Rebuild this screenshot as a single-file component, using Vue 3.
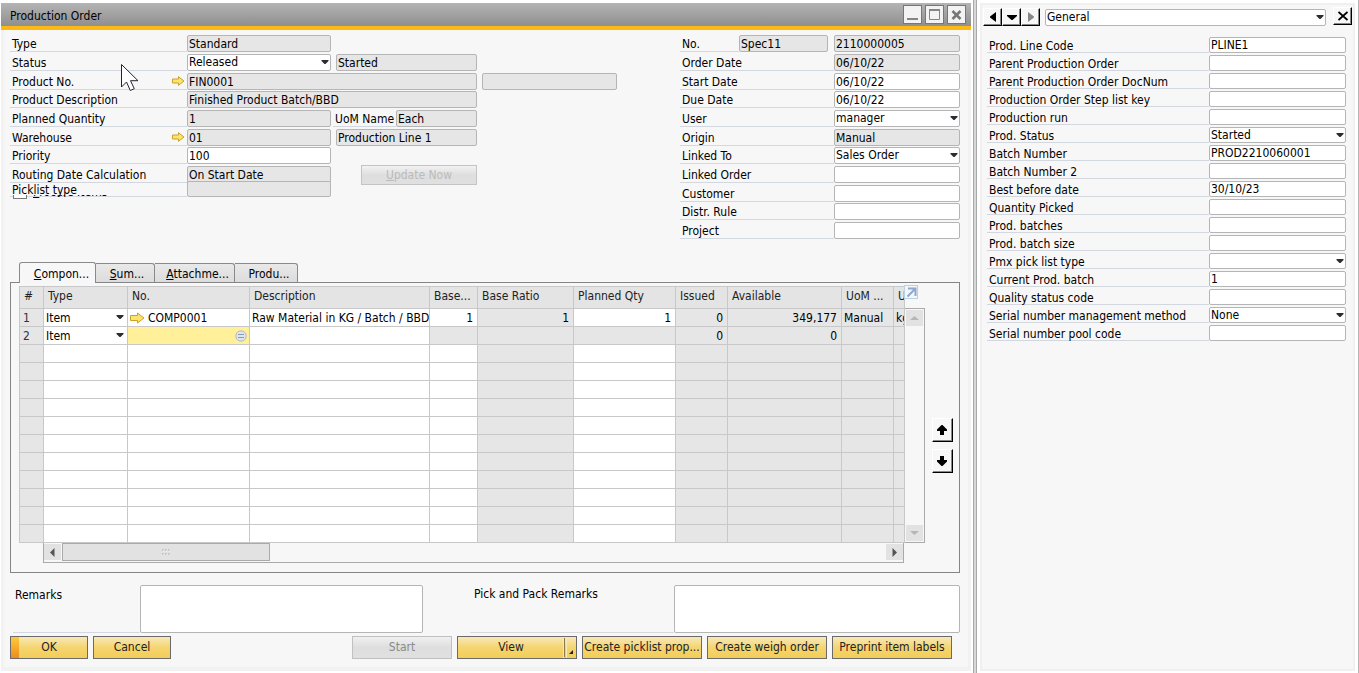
<script setup>
import { ref } from 'vue'

const leftRows = [
  { id: 'type', label: 'Type', value: 'Standard', ro: true },
  { id: 'status', label: 'Status', value: 'Released', select: true, extra: 'Started' },
  { id: 'product', label: 'Product No.', value: 'FIN0001', ro: true, wide: true, arrow: true, third: true },
  { id: 'description', label: 'Product Description', value: 'Finished Product Batch/BBD', ro: true, wide: true },
  { id: 'quantity', label: 'Planned Quantity', value: '1', ro: true, uom: 'Each' },
  { id: 'warehouse', label: 'Warehouse', value: '01', ro: true, arrow: true, extra: 'Production Line 1' },
  { id: 'priority', label: 'Priority', value: '100' },
  { id: 'routing', label: 'Routing Date Calculation', value: 'On Start Date', ro: true, update: true },
]

const rightRows = [
  { id: 'number', label: 'No.', value: '2110000005', ro: true, series: 'Spec11' },
  { id: 'orderdate', label: 'Order Date', value: '06/10/22', ro: true },
  { id: 'startdate', label: 'Start Date', value: '06/10/22' },
  { id: 'duedate', label: 'Due Date', value: '06/10/22' },
  { id: 'user', label: 'User', value: 'manager', select: true },
  { id: 'origin', label: 'Origin', value: 'Manual', ro: true },
  { id: 'linkedto', label: 'Linked To', value: 'Sales Order', select: true },
  { id: 'linkedorder', label: 'Linked Order', value: '' },
  { id: 'customer', label: 'Customer', value: '' },
  { id: 'rule', label: 'Distr. Rule', value: '' },
  { id: 'project', label: 'Project', value: '' },
]

const sideRows = [
  { label: 'Prod. Line Code', value: 'PLINE1' },
  { label: 'Parent Production Order', value: '' },
  { label: 'Parent Production Order DocNum', value: '' },
  { label: 'Production Order Step list key', value: '' },
  { label: 'Production run', value: '' },
  { label: 'Prod. Status', value: 'Started', select: true },
  { label: 'Batch Number', value: 'PROD2210060001' },
  { label: 'Batch Number 2', value: '' },
  { label: 'Best before date', value: '30/10/23' },
  { label: 'Quantity Picked', value: '' },
  { label: 'Prod. batches', value: '' },
  { label: 'Prod. batch size', value: '' },
  { label: 'Pmx pick list type', value: '', select: true },
  { label: 'Current Prod. batch', value: '1' },
  { label: 'Quality status code', value: '' },
  { label: 'Serial number management method', value: 'None', select: true },
  { label: 'Serial number pool code', value: '' },
]

const tabs = [
  { key: 'C', rest: 'ompon...', cls: 'tab-a' },
  { key: 'S', rest: 'um...', cls: 'tab-b' },
  { key: 'A', rest: 'ttachme...', cls: 'tab-c' },
  { key: '', rest: 'Produ...', cls: 'tab-d' },
]
const active = ref(0)
const emptyRows = 11
</script>

<template>
  <div class="desktop">
    <main class="window">
      <header class="titlebar">
        <h1>Production Order</h1>
        <button class="winbtn" aria-label="Minimize">
          <svg width="17" height="17" viewBox="0 0 17 17"><path d="M3 13h11" stroke="#858585" stroke-width="2" /></svg>
        </button>
        <button class="winbtn" aria-label="Maximize">
          <svg width="17" height="17" viewBox="0 0 17 17"><path d="M3.500 3.500h10v10h-10z" fill="none" stroke="#858585" stroke-width="1" /><path d="M3 4h11" stroke="#858585" stroke-width="2" /></svg>
        </button>
        <button class="winbtn" aria-label="Close">
          <svg width="17" height="17" viewBox="0 0 17 17"><path d="M4.500 5l8 8M12.500 5l-8 8" stroke="#777" stroke-width="2.600" /></svg>
        </button>
      </header>

      <div class="content">
        <div class="forms">
          <form class="left" @submit.prevent>
            <div v-for="r in leftRows" :key="r.id" class="row">
              <label class="cap" :for="r.id">{{ r.label }}
                <svg v-if="r.arrow" class="link" width="13" height="10" viewBox="0 0 13 10"><path d="M.5 3h6V.7L12 5 6.500 9.300V7h-6z" fill="#fbe36c" stroke="#c9a227" /></svg>
              </label>
              <span v-if="r.select" class="pick mid">
                <select :id="r.id" class="field"><option>{{ r.value }}</option></select>
                <svg class="caret" width="8" height="5" viewBox="0 0 8 5"><path d="M.5 0h7v1L4.500 4h-1L.5 1z" fill="#2b2b33" /></svg>
              </span>
              <input v-else :id="r.id" class="field" :class="[r.wide ? 'wide' : 'mid', { ro: r.ro }]" :value="r.value" :readonly="r.ro">
              <input v-if="r.extra" class="field ro second" :value="r.extra" :aria-label="r.label + ' detail'" readonly>
              <input v-if="r.third" class="field ro third" value="" aria-label="Product variant" readonly>
              <template v-if="r.uom">
                <label class="uom" for="uom">UoM Name</label>
                <input id="uom" class="field ro uomfield" :value="r.uom" readonly>
              </template>
              <button v-if="r.update" class="update" disabled><u>U</u>pdate Now</button>
            </div>
            <div class="row picklist">
              <label class="cap" for="picklist">Picklist type</label>
              <input id="picklist" class="field ro mid" value="" readonly>
            </div>
            <div class="procure">
              <input id="procure" type="checkbox"><label for="procure"><u>P</u>rocure Items</label>
            </div>
          </form>

          <form class="right" @submit.prevent>
            <div v-for="r in rightRows" :key="r.id" class="row">
              <label class="cap" :class="{ short: r.series }" :for="r.id">{{ r.label }}</label>
              <input v-if="r.series" class="field ro series" :value="r.series" aria-label="Series" readonly>
              <span v-if="r.select" class="pick grow">
                <select :id="r.id" class="field"><option>{{ r.value }}</option></select>
                <svg class="caret" width="8" height="5" viewBox="0 0 8 5"><path d="M.5 0h7v1L4.500 4h-1L.5 1z" fill="#2b2b33" /></svg>
              </span>
              <input v-else :id="r.id" class="field grow" :class="{ ro: r.ro }" :value="r.value" :readonly="r.ro">
            </div>
          </form>
        </div>

        <nav class="tabs" role="tablist">
          <button v-for="(t, i) in tabs" :key="t.rest" role="tab" :aria-selected="active === i" :class="[t.cls, { on: active === i }]" @click="active = i"><u>{{ t.key }}</u>{{ t.rest }}</button>
        </nav>

        <section class="panel">
          <div class="gridarea">
            <div class="tablewrap">
              <table>
                <colgroup>
                  <col class="c0"><col class="c1"><col class="c2"><col class="c3"><col class="c4"><col class="c5"><col class="c6"><col class="c7"><col class="c8"><col class="c9"><col>
                </colgroup>
                <thead>
                  <tr>
                    <th>#</th><th>Type</th><th>No.</th><th>Description</th><th>Base...</th><th>Base Ratio</th><th>Planned Qty</th><th>Issued</th><th>Available</th><th>UoM ...</th><th>UoM</th>
                  </tr>
                </thead>
                <tbody>
                  <tr>
                    <td class="g idx">1</td>
                    <td><span class="pick cell"><select aria-label="Row 1 type"><option>Item</option></select><svg class="caret" width="8" height="5" viewBox="0 0 8 5"><path d="M.5 0h7v1L4.500 4h-1L.5 1z" fill="#2b2b33" /></svg></span></td>
                    <td class="code"><svg width="15" height="12" viewBox="0 0 15 12"><path d="M.5 3.500h7V1l6.500 5-6.500 5V8.500h-7z" fill="#fbe36c" stroke="#c9a227" /></svg>COMP0001</td>
                    <td>Raw Material in KG / Batch / BBD</td>
                    <td class="n">1</td><td class="g n">1</td><td class="n">1</td><td class="g n">0</td><td class="g n">349,177</td><td class="g">Manual</td><td class="g">kg</td>
                  </tr>
                  <tr>
                    <td class="g idx">2</td>
                    <td><span class="pick cell"><select aria-label="Row 2 type"><option>Item</option></select><svg class="caret" width="8" height="5" viewBox="0 0 8 5"><path d="M.5 0h7v1L4.500 4h-1L.5 1z" fill="#2b2b33" /></svg></span></td>
                    <td class="focus"><svg width="12" height="12" viewBox="0 0 12 12"><circle cx="6" cy="6" r="5.200" fill="#dfe5ec" stroke="#b3bac4" /><path d="M3 4.500h6M3 7.500h6" stroke="#8a9bb8" /></svg></td>
                    <td></td><td class="g"></td><td class="g"></td><td class="g"></td><td class="g n">0</td><td class="g n">0</td><td class="g"></td><td class="g"></td>
                  </tr>
                  <tr v-for="n in emptyRows" :key="n">
                    <td class="g"></td><td></td><td></td><td></td><td></td><td class="g"></td><td></td><td class="g"></td><td class="g"></td><td class="g"></td><td class="g"></td>
                  </tr>
                </tbody>
              </table>
              <div class="hscroll">
                <button class="sb" aria-label="Scroll left"><svg width="5" height="9" viewBox="0 0 5 9"><path d="M4.500 0v9L0 4.500z" fill="#555" /></svg></button>
                <div class="thumb">
                  <svg width="9" height="6" viewBox="0 0 9 6"><path d="M0 1h2M3 1h2M6 1h2M0 5h2M3 5h2M6 5h2" stroke="#aaa" /><path d="M1 2h1M4 2h1M7 2h1M1 6h1M4 6h1M7 6h1" stroke="#fff" /></svg>
                </div>
                <button class="sb" aria-label="Scroll right"><svg width="5" height="9" viewBox="0 0 5 9"><path d="M.5 0v9L5 4.500z" fill="#555" /></svg></button>
              </div>
            </div>
            <div class="vcol">
              <button class="expand" aria-label="Expand grid">
                <svg width="13" height="13" viewBox="0 0 13 13"><path d="M3 2.500h7.500V10M10 3L2.500 10.500" fill="none" stroke="#8fa8cf" stroke-width="2" /></svg>
              </button>
              <div class="vscroll">
                <button class="sb" aria-label="Scroll up"><svg width="9" height="4" viewBox="0 0 9 4"><path d="M0 4h9L4.500 0z" fill="#b5b5b5" /></svg></button>
                <button class="sb" aria-label="Scroll down"><svg width="9" height="4" viewBox="0 0 9 4"><path d="M0 0h9L4.500 4z" fill="#b5b5b5" /></svg></button>
              </div>
            </div>
            <div class="movers">
              <button class="raised" aria-label="Move row up"><svg width="12" height="10" viewBox="0 0 12 10"><path d="M5.500 0h1L11 4.500V6H8v4H4V6H1V4.500z" /></svg></button>
              <button class="raised" aria-label="Move row down"><svg width="12" height="10" viewBox="0 0 12 10"><path d="M5.500 10h1L11 5.500V4H8V0H4v4H1v1.500z" /></svg></button>
            </div>
          </div>
        </section>

        <div class="remarks">
          <label class="rem-a" for="remarks">Remarks</label>
          <textarea id="remarks" class="area-a"></textarea>
          <label class="rem-b" for="pickremarks">Pick and Pack Remarks</label>
          <textarea id="pickremarks" class="area-b"></textarea>
        </div>

        <footer class="actions">
          <button class="gold small ok">OK</button>
          <button class="gold small">Cancel</button>
          <button class="start" disabled>Start</button>
          <button class="gold view">View<svg width="11" height="21" viewBox="0 0 11 21"><path d="M.5 0v21M3.500 0v21" stroke="#f9e9b4" /><path d="M1.500 1v19" stroke="#8b7a4b" /><path d="M10 13v4H6z" fill="#222" /></svg></button>
          <button class="gold">Create picklist prop...</button>
          <button class="gold">Create weigh order</button>
          <button class="gold">Preprint item labels</button>
        </footer>
      </div>
    </main>

    <div class="splitter"></div>

    <aside class="side">
      <div class="sidebody">
        <div class="toolbar">
          <button class="raised nav" aria-label="Previous"><svg width="6" height="10" viewBox="0 0 6 10"><path d="M6 0v10L0 5.500v-1z" /></svg></button>
          <button class="raised nav" aria-label="List"><svg width="10" height="5" viewBox="0 0 10 5"><path d="M0 0h10v1L5.500 5h-1L0 1z" /></svg></button>
          <button class="raised nav" aria-label="Next"><svg width="6" height="10" viewBox="0 0 6 10"><path d="M0 0v10l6-4.500v-1z" fill="#888" /></svg></button>
          <span class="pick category">
            <select class="field" aria-label="Category"><option>General</option></select>
            <svg class="caret" width="8" height="5" viewBox="0 0 8 5"><path d="M.5 0h7v1L4.500 4h-1L.5 1z" fill="#2b2b33" /></svg>
          </span>
          <button class="raised nav close" aria-label="Close panel"><svg width="10" height="10" viewBox="0 0 10 10"><path d="M.5 1l9 8M9.500 1l-9 8" stroke="#000" stroke-width="1.800" /></svg></button>
        </div>
        <form class="udf" @submit.prevent>
          <div v-for="(r, i) in sideRows" :key="r.label" class="row">
            <label class="cap" :class="{ low: r.select }" :for="'udf' + i">{{ r.label }}</label>
            <span v-if="r.select" class="pick udffield">
              <select :id="'udf' + i" class="field"><option>{{ r.value }}</option></select>
              <svg class="caret" width="8" height="5" viewBox="0 0 8 5"><path d="M.5 0h7v1L4.500 4h-1L.5 1z" fill="#2b2b33" /></svg>
            </span>
            <input v-else :id="'udf' + i" class="field udffield" :value="r.value">
          </div>
        </form>
      </div>
    </aside>

    <svg class="pointer" width="19" height="28" viewBox="0 0 19 28"><path d="M.5 .5v22.500l5-5 3.800 8.500 4-1.800-3.800-8H17z" fill="#fff" stroke="#223" /></svg>
  </div>
</template>

<style>
body { margin: 0; background: #fff; }
</style>

<style scoped>
.desktop, .desktop * { box-sizing: border-box; }
.desktop {
  display: flex;
  min-height: 100vh;
  position: relative;
  font-family: Tahoma, "DejaVu Sans Condensed", "Noto Sans", sans-serif;
  font-size: 12px;
  line-height: 16px;
  color: #000;
}
button, input, select, textarea { font: inherit; color: inherit; margin: 0; padding: 0; border-radius: 0; }
button { display: flex; align-items: center; justify-content: center; white-space: nowrap; overflow: hidden; }
svg { display: block; flex: none; }

.window { flex: 1; min-width: 0; margin: 3px 2px 2px 1px; background: #f2f2f2; display: flex; flex-direction: column; }
.titlebar {
  display: flex; align-items: center; gap: 3px; height: 27px; padding: 0 5px 0 9px;
  background: linear-gradient(#b4b4b4, #8f8f8f); border-bottom: 4px solid #fdb813;
}
h1 { flex: 1; margin: 0; font-size: 12px; font-weight: 400; line-height: 18px; padding-top: 2px; }
.winbtn { width: 19px; height: 19px; background: #f3f3f3; border: 1px solid #777; }
.content { background: #f7f7f7; margin: 0 3px 4px; padding: 5px 8px 8px 6px; flex: 1; }

.forms { display: flex; justify-content: space-between; height: 227px; }
.left, .right { display: grid; grid-auto-rows: 19px 19px 18px; align-content: start; }
.right { width: 280px; grid-template-columns: minmax(0, 1fr); }
.row { display: flex; align-items: flex-start; min-width: 0; }
.cap { width: 177px; height: 17px; line-height: 18px; padding-left: 2px; border-bottom: 1px solid #d3d7df; white-space: nowrap; display: flex; justify-content: space-between; }
.link { margin: 3px 2px 0 0; }
.field { display: block; height: 17px; padding: 0 1px; border: 1px solid #b5b5b5; border-radius: 2px; background: #fff; outline: none; min-width: 0; line-height: 15px; }
.ro { background: #e6e6e6; }
.mid { width: 144px; }
.wide { width: 290px; }
.second { width: 141px; margin-left: 5px; }
.third { width: 135px; margin-left: 5px; }
.uom { width: 63px; margin-left: 2px; padding-left: 2px; height: 17px; border-bottom: 1px solid #d3d7df; white-space: nowrap; line-height: 18px; }
.uomfield { width: 81px; }
.update { width: 116px; height: 20px; margin: -1px 0 0 30px; background: linear-gradient(#f2f2f2, #dedede 50%, #e0e0e0); border: 1px solid #c4c4c4; color: #bbb; }
.picklist { margin-top: -4px; }
.picklist .field, .picklist .cap { height: 16px; }
.procure { display: flex; align-items: flex-end; height: 20px; margin: -23px 0 0 3px; clip-path: inset(15px 0 1px 0); line-height: 16px; }
.procure input { appearance: none; width: 14px; height: 14px; border: 1px solid #777; background: #fff; margin: 0 6px 1px 0; }
.pick { display: block; position: relative; height: 17px; }
.pick select { width: 100%; appearance: none; }
.pick .caret { position: absolute; right: 2px; top: 6px; pointer-events: none; }
.right .cap { width: 154px; }
.right .cap.short { width: 59px; }
.right .series { width: 89px; margin-right: 6px; }
.grow { flex: 1; min-width: 0; }

.tabs { display: flex; padding-left: 9px; height: 20px; align-items: flex-end; position: relative; z-index: 1; }
.tabs button { height: 19px; border: 1px solid #8a8a8a; border-left: 0; border-bottom: 0; border-radius: 0 3px 0 0; background: linear-gradient(#e9e9e9, #dcdcdc); line-height: 18px; padding-top: 1px; }
.tabs button.on { height: 21px; margin-bottom: -1px; border-left: 1px solid #8a8a8a; border-radius: 3px 3px 0 0; background: #f7f7f7; }
.tabs .tab-a { width: 77px; padding-left: 8px; }
.tabs .tab-b { width: 59px; padding-left: 4px; }
.tabs .tab-c { width: 80px; padding-left: 6px; }
.tabs .tab-d { width: 63px; padding-left: 6px; }

.panel { border: 1px solid #858585; padding: 3px 6px 9px 8px; }
.gridarea { display: flex; }
.tablewrap { flex: 1; min-width: 0; }
table { width: 100%; table-layout: fixed; border-collapse: collapse; }
.c0 { width: 24px; } .c1 { width: 84px; } .c2 { width: 122px; } .c3 { width: 180px; } .c4 { width: 48px; }
.c5 { width: 96px; } .c6 { width: 102px; } .c7 { width: 52px; } .c8 { width: 114px; } .c9 { width: 52px; }
th, td { border: 1px solid #c8c8c8; overflow: hidden; white-space: nowrap; padding: 0 2px; text-align: left; font-weight: 400; }
th { height: 22px; padding: 0 0 3px 4px; background: #e4e4e4; color: #222; }
td { height: 18px; line-height: 16px; padding-top: 1px; background: #fff; }
td.g { background: #e6e6e6; }
td.idx { padding-left: 3px; color: #333; }
td.n { text-align: right; padding-right: 4px; }
td.focus { background: #fff099; }
td.focus svg { margin-left: auto; }
td.code svg { display: inline-block; vertical-align: -2px; margin-right: 3px; }
.cell { height: 16px; }
.cell select { display: block; height: 16px; border: 0; background: transparent; }
.pick.cell .caret { right: 1px; top: 5px; }

.sb { width: 17px; height: 16px; border: 0; background: #e2e2e2; }
.hscroll { display: flex; align-items: center; height: 20px; margin: 0 1px 0 24px; border: 1px solid #aaa; border-top: 0; padding: 0 0 1px; }
.thumb { width: 208px; height: 18px; margin: 0 auto 0 1px; border: 1px solid #aaa; background: #e2e2e2; display: flex; align-items: center; justify-content: center; }
.vcol { width: 20px; display: flex; flex-direction: column; margin-bottom: 20px; }
.expand { width: 14px; height: 14px; margin: -1px 0 9px -1px; border: 1px solid #b7d3ea; background: #f3f7fb; }
.vscroll { flex: 1; border: 1px solid #aaa; border-left: 0; padding: 1px; display: flex; flex-direction: column; justify-content: space-between; }
.movers { margin-left: 7px; padding-top: 132px; display: flex; flex-direction: column; gap: 7px; }
.raised { background: #f7f7f7; border: 1px solid #fff; border-right: 1px solid #000; border-bottom: 1px solid #000; box-shadow: inset -1px -1px #888; }
.movers .raised { width: 21px; height: 24px; padding-right: 2px; }

.remarks { display: flex; margin-top: 12px; }
.remarks textarea { display: block; height: 48px; border: 1px solid #b5b5b5; border-radius: 2px; background: #fff; resize: none; outline: none; }
.rem-a { width: 127px; margin-left: 3px; padding: 2px 0 0 2px; border-bottom: 1px solid #d3d7df; }
.area-a { width: 283px; }
.rem-b { flex: 1; margin-left: 47px; padding: 1px 0 0 4px; border-bottom: 1px solid #d8d8d8; }
.area-b { width: 286px; }

.actions { display: flex; gap: 5px; margin-top: 3px; padding-right: 8px; }
.actions button { height: 23px; width: 120px; }
.gold { border: 1px solid #6a6a6a; background: linear-gradient(#f8e8b8, #f5d570 50%, #f2cd58); color: #222; padding-bottom: 2px; }
.actions .small { width: 78px; }
.ok { position: relative; }
.ok::before { content: ""; position: absolute; left: 0; top: 0; width: 8px; height: 100%; background: linear-gradient(#fdca3c, #ee8d1c); }
.actions .start { width: 100px; margin-left: auto; border: 1px solid #c0c0c0; background: linear-gradient(#f0f0f0, #dedede 50%, #e0e0e0); color: #8a8a8a; padding-bottom: 2px; }
.view { position: relative; padding-right: 12px; }
.view svg { position: absolute; right: 2px; top: 0; }

.splitter { width: 4px; background: #d8d8d8; border: 1px solid #a8a8a8; border-width: 0 1px; }
.side { width: 382px; padding: 3px 3px 2px; border-right: 1px solid #b5b5b5; display: flex; }
.sidebody { flex: 1; border: 2px solid #f0f0f0; background: #f7f7f7; padding: 2px 0 0 1px; }
.toolbar { display: flex; align-items: center; height: 20px; }
.nav { width: 19px; height: 18px; }
.category { flex: 1; margin-left: 5px; }
.close { margin: 0 1px 3px 7px; }
.udf { display: grid; grid-auto-rows: 18px; padding: 10px 7px 0 4px; }
.udf .cap { flex: 1; height: 16px; padding-left: 2px; }
.udf .low { line-height: 19px; }
.udf .field { height: 16px; }
.udffield { width: 137px; }

.pointer { position: absolute; left: 121px; top: 64px; pointer-events: none; }
</style>
